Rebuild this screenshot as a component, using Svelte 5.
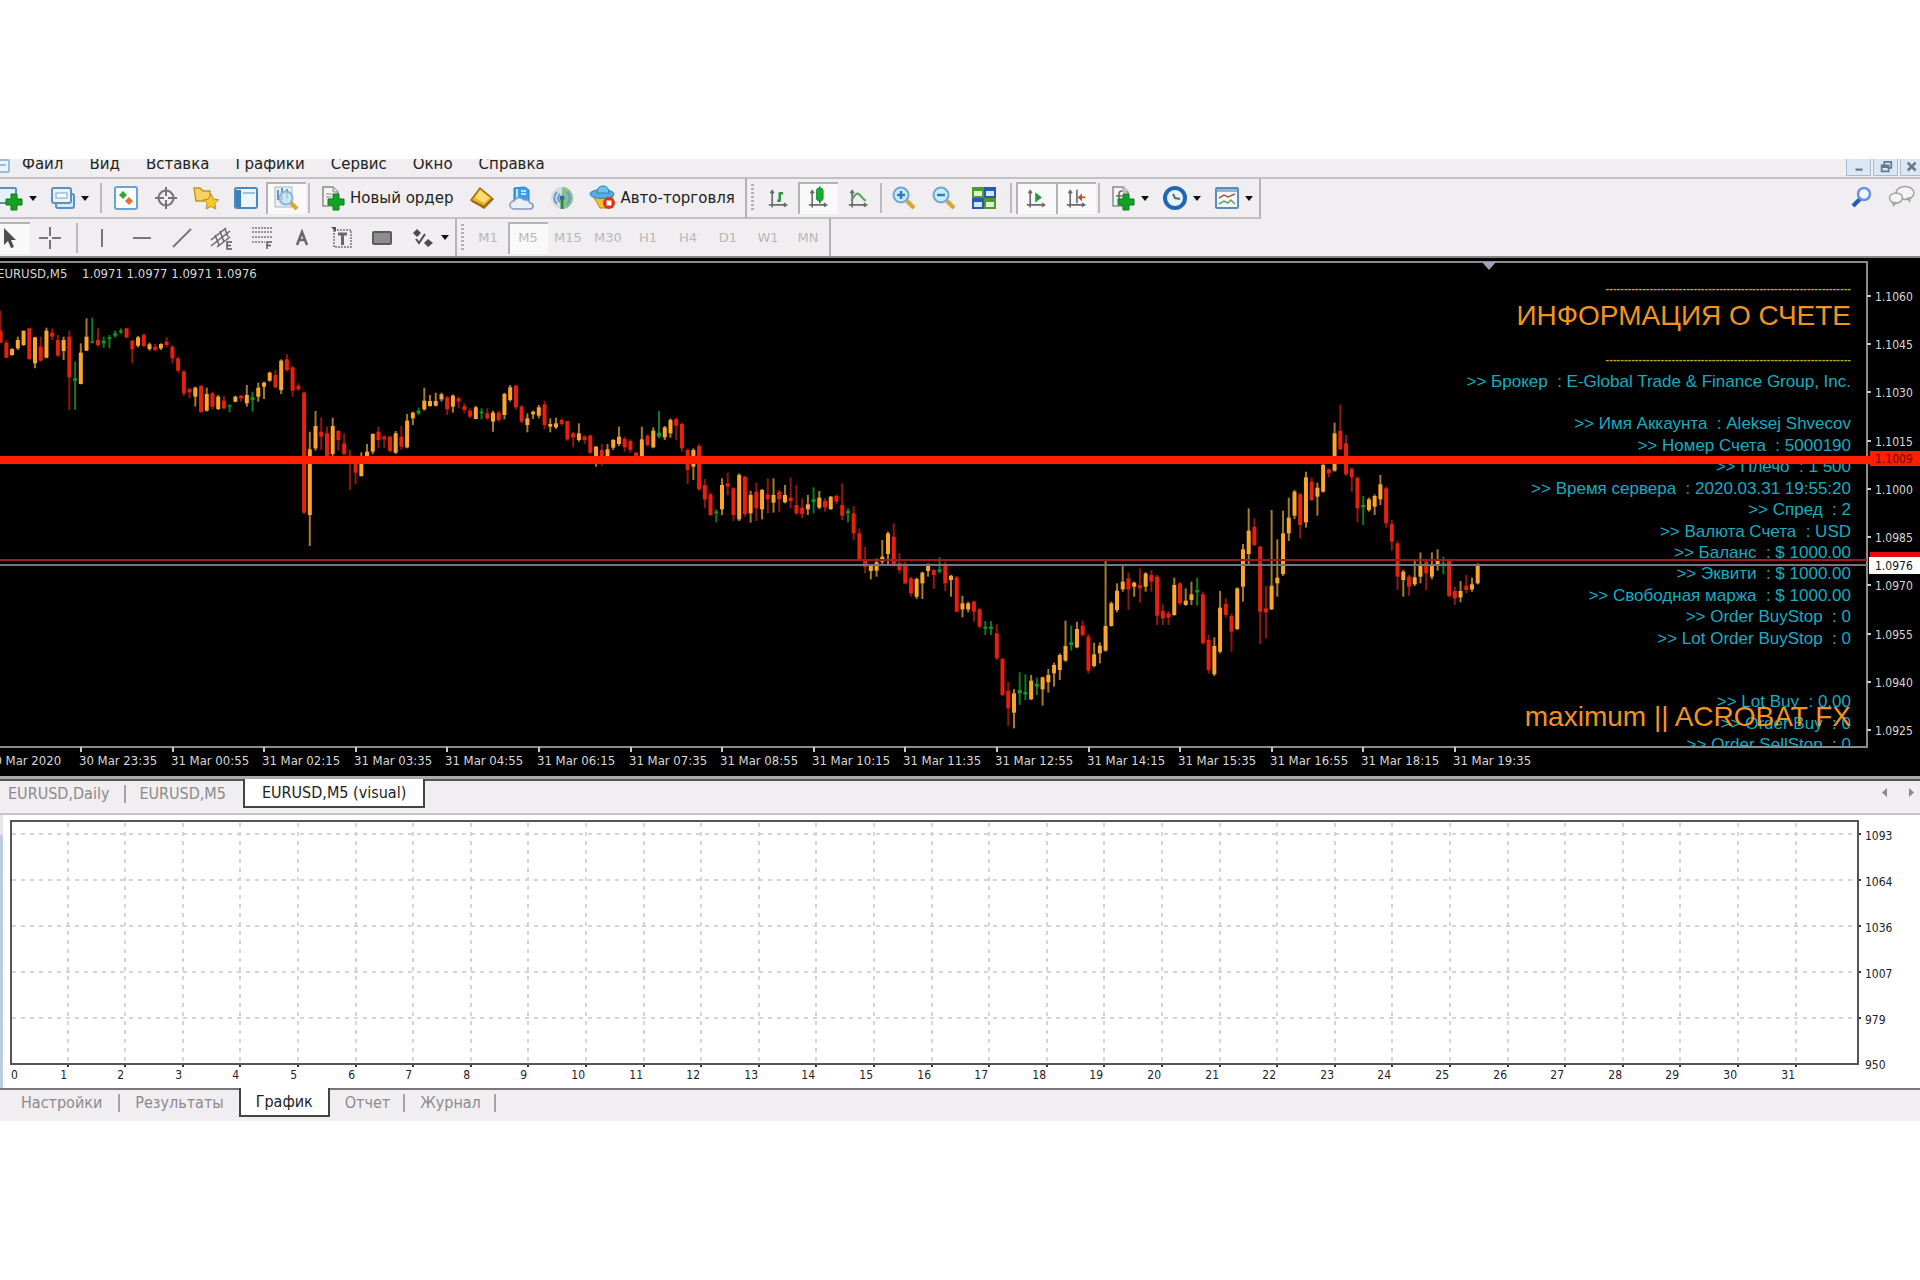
<script>
  const menu = ['Файл', 'Вид', 'Вставка', 'Графики', 'Сервис', 'Окно', 'Справка'];

  const plus = '<path d="M12 8h6v5h5v6h-5v5h-6v-5h-5v-6h5z" fill="#12a324" stroke="#0a7a18"/>';
  const withAxes = (shape) =>
    `<g transform="translate(2 3) scale(.84)"><path d="M5 2v20M1 19h21M3 5l2-3 2 3M19 17l3 2-3 2" fill="none" stroke="#6c6c6c" stroke-width="2"/>${shape}</g>`;
  const sheet = '<path d="M2 1h10l5 5v14H2z" fill="#f4f4f4" stroke="#8a8a8a" stroke-width="1.5"/><path d="M12 1v5h5" fill="#ddd" stroke="#8a8a8a"/>';
  const lens = '<path d="M15 15l7 7" stroke="#d9a530" stroke-width="4"/><circle cx="9" cy="9" r="7.5" fill="#c9ebfb" stroke="#6ea6d4" stroke-width="2"/>';

  const icons = {
    newChart:
      '<rect x="0" y="2" width="17" height="15" rx="1" fill="#e4f1fb" stroke="#5b92bd" stroke-width="2"/>' + plus,
    windows:
      '<rect x="5" y="8" width="18" height="14" rx="2" fill="#d8eaf8" stroke="#5c8fc4" stroke-width="2"/><rect x="1" y="2" width="19" height="15" rx="2" fill="#eaf4fc" stroke="#5c8fc4" stroke-width="2"/><path d="M5 7h11v5H5z" fill="#fff" stroke="#9dbfdd" stroke-width="1.5"/>',
    market:
      '<rect x="1" y="1" width="22" height="22" rx="2" fill="#fbfdff" stroke="#6ba2cf" stroke-width="2"/><path d="M9 5l4 4-4 4-4-4z" fill="#3aa33a"/><path d="M15 11l4 4-4 4-4-4z" fill="#e86a35"/>',
    target:
      '<circle cx="12" cy="12" r="7.5" fill="none" stroke="#747474" stroke-width="2"/><path d="M12 1v9M12 14v9M1 12h9M14 12h9" stroke="#747474" stroke-width="2"/>',
    navigator:
      '<path d="M0 2h6l3 3h7v10H2z" fill="#f7d263" stroke="#c29422" stroke-width="1.5"/><path d="M17 8l2.500 5 5 .8-3.700 3.700 1 5.500-4.800-2.600-4.800 2.600 1-5.500L9.500 13.800l5-.8z" fill="#fbc72c" stroke="#c08c14"/>',
    terminal:
      '<rect x="1" y="2" width="22" height="20" rx="2" fill="#edf6fd" stroke="#4d88bd" stroke-width="2"/><path d="M2 4h5v17H2z" fill="#3d7db9"/><path d="M9 7h12" stroke="#9cc2e2" stroke-width="2"/>',
    tester:
      '<rect x="1" y="1" width="17" height="20" fill="#e8eef4" stroke="#a9b6c4"/><path d="M4 4v10M8 2v12M13 3v10" stroke="#6f91b4" stroke-width="2"/><path d="M17 17l6 6" stroke="#d9a530" stroke-width="4"/><circle cx="12" cy="12" r="6.5" fill="#c3e2f6" fill-opacity=".75" stroke="#8bb3d6" stroke-width="2"/>',
    order: sheet + '<path d="M5 8h6M5 11h5" stroke="#888"/>' + plus,
    gold:
      '<path d="M10 2l13 11-9 9L1 14z" fill="#e9ae2b" stroke="#a06c10" stroke-width="1.5"/><path d="M10 4l10 8-6 5-9-5z" fill="#ffdc73"/><path d="M2 15l12 6 8-8" fill="none" stroke="#a06c10" stroke-width="2"/>',
    vps:
      '<path d="M4 2l11-1 4 3v11H4z" fill="#3a9fe8" stroke="#2c7fc4"/><path d="M7 3v10M11 5h5M11 8h5" stroke="#bfe3fb" stroke-width="2"/><path d="M4 23a4 4 0 010-8 6 6 0 0110-1 5 5 0 016 3 3 3 0 010 6z" fill="#e9eff8" stroke="#8296bd" stroke-width="1.5"/>',
    signals:
      '<circle cx="12" cy="12" r="11" fill="#d3dedb"/><path d="M12 1a11 11 0 010 22z" fill="#8abf93"/><path d="M7 6a8 8 0 000 12M10 8a5 5 0 000 8M17 6a8 8 0 010 12" fill="none" stroke="#6b98cb" stroke-width="2"/><circle cx="12" cy="12" r="2.5" fill="#2a66b8"/><path d="M12 12v11" stroke="#2f8a3e" stroke-width="3"/>',
    auto:
      '<path d="M2 10h20l-4 12H9z" fill="#f2c02e" stroke="#bb8a14"/><ellipse cx="11" cy="8" rx="12" ry="4.5" fill="#58aee0" stroke="#2f7fb4"/><path d="M6 7q0-7 6-7t6 7z" fill="#6fc1ea" stroke="#2f7fb4"/><circle cx="18" cy="17" r="6" fill="#dc3216"/><rect x="15.5" y="14.5" width="5" height="5" fill="#fff"/>',
    bars: withAxes('<path d="M14 4v11M14 5h4M11 14h3" stroke="#2e9140" stroke-width="3"/>'),
    candles: withAxes('<path d="M14 -3v20" stroke="#0d8a20" stroke-width="2"/><rect x="10" y="-1" width="8" height="15" rx="3" fill="#16b02c" stroke="#0d8a20"/>'),
    line: withAxes('<path d="M4 14q6-12 10-7t7 7" fill="none" stroke="#4fa35e" stroke-width="2.5"/>'),
    zoomIn: lens + '<path d="M5 9h8M9 5v8" stroke="#3578b8" stroke-width="2.5"/>',
    zoomOut: lens + '<path d="M5 9h8" stroke="#3578b8" stroke-width="2.5"/>',
    tile:
      '<path d="M0 1h12v11H0z" fill="#4f9a2b"/><path d="M12 1h12v11H12z" fill="#2859b8"/><path d="M0 12h12v11H0z" fill="#2859b8"/><path d="M12 12h12v11H12z" fill="#4f9a2b"/><path d="M2 5h8v5H2zM14 16h8v5h-8z" fill="#dff3c8"/><path d="M14 5h8v5h-8zM2 16h8v5H2z" fill="#d4e6fb"/>',
    scroll: withAxes('<path d="M11 4l8 6-8 6z" fill="#1d9c36"/>'),
    shift: withAxes('<path d="M13 1v16" stroke="#6c6c6c" stroke-width="2"/><path d="M14 10l5-5v4h4v2h-4v4z" fill="#c5502e"/>'),
    indicators: sheet + '<path d="M8 16V8q0-3 3-3M5 10h6" fill="none" stroke="#666" stroke-width="1.5"/>' + plus,
    clock:
      '<circle cx="12" cy="12" r="10" fill="#e8f3fc" stroke="#1d68b4" stroke-width="4"/><path d="M10 8l2 4 5 1" fill="none" stroke="#666" stroke-width="2"/>',
    template:
      '<rect x="1" y="2" width="22" height="20" rx="1" fill="#f4f9fd" stroke="#5b8db8" stroke-width="2"/><path d="M2 3h20v3H2z" fill="#8db8dc"/><path d="M4 12l5-3 4 2 7-3" fill="none" stroke="#b9543c" stroke-width="1.5"/><path d="M4 18l5-3 4 2 3-3 4 4" fill="none" stroke="#5aa565" stroke-width="1.5"/>',
    find:
      '<path d="M3 21l8-8" stroke="#2a56b8" stroke-width="4"/><circle cx="14" cy="9" r="6" fill="#f2f7fd" stroke="#6a92dc" stroke-width="2.5"/>',
    chat:
      '<ellipse cx="16" cy="8" rx="9" ry="6.5" fill="#f4f4f4" stroke="#a2a2a2" stroke-width="1.5"/><path d="M17 13l4 5 1-6z" fill="#a2a2a2"/><ellipse cx="7" cy="13" rx="6.5" ry="5" fill="#f4f4f4" stroke="#a2a2a2" stroke-width="1.5"/><path d="M3 17l1 5 5-5z" fill="#a2a2a2"/>',
    cursor: '<path d="M6 2v17l4-4 3 7 3-1-3-7h5z" fill="#4c4c4c"/>',
    cross: '<path d="M12 1v9M12 14v9M1 12h9M14 12h9" stroke="#777" stroke-width="2"/>',
    vline: '<path d="M12 3v18" stroke="#777" stroke-width="2"/>',
    hline: '<path d="M3 12h18" stroke="#777" stroke-width="2"/>',
    trend: '<path d="M3 21L21 3" stroke="#777" stroke-width="2"/>',
    channel:
      '<path d="M1 14L16 2M1 20L20 5M7 21L20 11M5 9l4 10M10 5l4 11M15 3l3 8" stroke="#666" stroke-width="1.5"/><path d="M22 16h-5v7h5M17 19.500h4" fill="none" stroke="#555" stroke-width="1.5"/>',
    fibo:
      '<path d="M2 2h20M2 6h20M2 11h20M2 16h13" stroke="#777" stroke-width="1.5" stroke-dasharray="2 1"/><path d="M17 23v-7h5M17 19.500h4" fill="none" stroke="#555" stroke-width="1.5"/>',
    letter: '<path d="M7 19l5-13 5 13M9 14h6" fill="none" stroke="#686868" stroke-width="2.5"/>',
    label:
      '<rect x="4" y="4" width="17" height="17" fill="none" stroke="#777" stroke-width="1.5" stroke-dasharray="2 1"/><path d="M8 8h9M12.500 8v11" stroke="#686868" stroke-width="3"/><path d="M1 1h5v5z" fill="#555"/>',
    rect: '<rect x="3" y="6" width="18" height="12" rx="1" fill="#8d8d8d" stroke="#5c5c5c" stroke-width="2"/>',
    arrows:
      '<path d="M6 3l4 4-4 4-4-4z" fill="#4c4c4c"/><path d="M17 13l5 4-5 4-4-4z" fill="#4c4c4c"/><path d="M5 13l3 4 6-9" fill="none" stroke="#4c4c4c" stroke-width="2"/>'
  };

  const mainTools = [
    { icon: 'newChart', tip: 'Новый график', drop: true },
    { icon: 'windows', tip: 'Профили', drop: true },
    { sep: 'wide' },
    { icon: 'market', tip: 'Обзор рынка' },
    { icon: 'target', tip: 'Окно данных' },
    { icon: 'navigator', tip: 'Навигатор' },
    { icon: 'terminal', tip: 'Терминал' },
    { icon: 'tester', tip: 'Тестер стратегий', on: true },
    { sep: 'narrow' },
    { icon: 'order', text: 'Новый ордер' },
    { icon: 'gold', tip: 'Редактор' },
    { icon: 'vps', tip: 'Виртуальный хостинг' },
    { icon: 'signals', tip: 'Сигналы' },
    { icon: 'auto', text: 'Авто-торговля' }
  ];
  const chartTools = [
    { icon: 'bars', tip: 'Бары' },
    { icon: 'candles', tip: 'Свечи', on: true },
    { icon: 'line', tip: 'Линия' },
    { sep: 'narrow' },
    { icon: 'zoomIn', tip: 'Увеличить' },
    { icon: 'zoomOut', tip: 'Уменьшить' },
    { icon: 'tile', tip: 'Расположить окна' },
    { sep: 'wide' },
    { icon: 'scroll', tip: 'Автопрокрутка', on: true },
    { icon: 'shift', tip: 'Сдвиг графика', on: true },
    { sep: 'narrow' },
    { icon: 'indicators', tip: 'Индикаторы', drop: true },
    { icon: 'clock', tip: 'Периоды', drop: true },
    { icon: 'template', tip: 'Шаблоны', drop: true }
  ];
  const drawTools = [
    { icon: 'cursor', tip: 'Курсор', on: true },
    { icon: 'cross', tip: 'Перекрестие' },
    { sep: 'wide' },
    { icon: 'vline', tip: 'Вертикальная линия' },
    { icon: 'hline', tip: 'Горизонтальная линия' },
    { icon: 'trend', tip: 'Трендовая линия' },
    { icon: 'channel', tip: 'Канал' },
    { icon: 'fibo', tip: 'Линии Фибоначчи' },
    { icon: 'letter', tip: 'Текст' },
    { icon: 'label', tip: 'Текстовая метка' },
    { icon: 'rect', tip: 'Прямоугольник' },
    { icon: 'arrows', tip: 'Стрелки', drop: true }
  ];
  const periods = ['M1', 'M5', 'M15', 'M30', 'H1', 'H4', 'D1', 'W1', 'MN'];

  // Candles: colour, high, low, body top, body bottom, in thirds of a unit below each block's base.
  const blocks = [
    {
      base: 32,
      rows: `r62 160 122 158,r150 205 158 203,y175 197 177 195,y140 180 150 175,y122 168 122 165,r113 210 115 207,y140 235 142 220,r140 215 170 212,y113 205 122 203,r115 150 128 140,r135 200 150 197,y140 210 150 183,r122 360 140 262,g215 360 265 272,y160 283 188 282,y85 183 140 182,g83 160 154 158,r115 170 150 165,g140 173 152 160,g135 175 142 147,g122 143 130 137,g115 132 122 127,r113 145 115 142,r150 220 152 178,y138 172 142 167,r130 172 135 168,y158 182 163 177,r162 182 170 180,y160 180 162 175,r142 172 155 165,r165 220 170 205,r200 248 205 242,r240 318 245 310,r293 325 297 307,y290 350 293 320,r285 368 288 366,y293 365 312 362,r305 358 310 350,y315 360 320 357,r318 358 332 355,g343 367 346 350,y317 337 320 335,r315 335 317 325,y285 350 315 340,g305 365 322 330,y278 335 293 320,y275 327 278 290,y245 275 248 272,r240 295 255 292,y208 312 212 300,r192 245 208 240,r228 320 232 302,r280 303 287 298,r305 672 308 668,y425 768 478 675,y363 482 408 475,r382 480 425 440,r410 505 430 500,y383 500 408 492,r420 482 423 450,r430 497 460 492,r480 600 497 515,r500 582 510 548,y487 560 510 558,y462 505 485 500,y430 492 432 485,r410 475 425 450,r435 473 440 448,r437 487 440 483,y423 492 430 488,r408 480 440 470,y372 475 392 472,y365 405 368 385,g353 375 362 370,y293 362 332 358,y315 350 333 348,y308 350 333 347,y308 335 313 328,r318 375 322 358,y313 368 317 350,r320 355 325 335,r340 370 348 360,r355 385 362 380,y348 388 352 387`
    },
    {
      base: 112,
      rows: `g115 148 125 130,r115 150 130 145,y122 185 128 155,r122 155 128 150,y68 148 72 135,y45 95 52 90,r45 118 47 112,r105 160 110 155,y130 187 145 165,y122 147 125 133,y105 145 112 137,r93 178 103 165,y145 187 162 170,y143 177 160 172,r145 167 150 162,r152 212 153 208,r185 232 190 202,y160 215 190 210,r195 222 200 210,r193 252 197 248,y228 290 230 270,r222 288 240 270,y222 265 238 260,y207 240 210 233,y170 228 200 222,r200 245 207 232,r208 248 213 240,r245 262 248 260,y170 262 208 260,r193 230 197 225,y172 235 182 232,g123 205 188 200,y168 210 172 202,y145 203 150 190,r143 210 147 167,r158 245 162 235,r235 342 240 300,y235 330 240 290,r222 362 228 358,r327 415 345 388,r367 438 373 435,g418 457 424 430,y325 435 345 418,r308 375 340 350,r352 453 355 435,y310 453 315 448,r318 440 320 432,y362 458 375 430,r338 453 365 415,y357 448 360 418,r325 430 373 388,y325 428 375 398,r360 427 365 388,y345 400 375 397,r323 415 383 393,r345 435 405 430,r385 445 413 432,y375 435 403 418,g352 430 388 396,y363 418 383 413,r385 425 393 412,y378 420 380 417,r373 402 378 395,r340 450 405 437,g415 457 423 430,r408 510 430 490,r475 572 490 570,r530 610 568 590`
    },
    {
      base: 222,
      rows: `y255 298 257 273,y235 290 247 272,y180 255 230 245,y155 252 160 222,r130 260 170 255,r220 280 250 270,r245 313 258 310,r290 350 295 340,y293 357 297 350,y275 357 278 310,y250 290 255 273,r268 327 270 285,g232 280 268 275,r245 333 258 310,y285 350 287 300,r288 397 292 395,y347 412 370 388,y365 397 370 388,r362 425 365 395,r383 445 388 440,g423 465 440 446,g423 465 440 446,r433 540 460 535,r533 648 537 645,r605 738 632 685,y627 745 640 698,g577 675 630 640,g583 660 636 643,y585 660 602 658,g593 645 612 620,y590 677 592 628,y567 638 585 607,y548 620 555 580,y520 600 525 570,y422 545 498 542,g437 512 487 495,y425 505 447 502,r422 470 437 465,r462 580 470 572,y488 562 523 558,y487 550 497 520,y238 515 438 512,y365 440 370 438,y310 397 332 390,y257 335 305 328,r278 390 295 328,y305 350 308 320,r265 368 315 325,y277 335 280 320,r270 335 285 305,r285 435 290 407,r373 435 393 415,r393 435 400 413,y293 407 315 405,r307 375 310 370,y325 377 362 375,y305 375 343 360,g293 377 330 337,r335 493 343 490,r465 580 480 570,y472 588 498 583,y333 520 383 515,r355 412 372 405,r400 515 408 455,y322 450 325 447,y192 365 208 320,y85 258 152 222,r115 198 140 195,r197 492 200 395,r318 475 385 397,y90 390 317 388`
    },
    {
      base: 132,
      rows: `y448 620 563 580,y362 558 430 552,y323 453 383 430,y300 387 305 377,r308 445 313 405,y245 413 262 397,r262 333 275 330,y278 377 293 320,y222 308 225 305,r235 262 238 250,y98 245 130 242,r45 180 122 178,r135 258 160 252,r232 305 237 262,r260 397 263 355,g318 405 345 352,y323 365 328 360,y313 375 318 350,y255 345 283 328,r290 413 295 400,r390 482 402 455,r453 600 460 560,y540 620 545 570,r555 617 560 590,y508 588 562 583,y487 580 525 560,r508 600 515 550,y487 568 525 560,y478 542 507 523,g500 552 520 528,r508 622 510 618,r590 645 603 625,y573 637 603 622,r555 610 587 600,y563 605 583 598,y520 583 525 580`
    }
  ];
  const lastX = 1477.7;
  const stepX = 5.725;
  const parsed = blocks.flatMap(({ base, rows }) =>
    rows.split(',').map((row) => {
      const [high, low, top, bottom] = row.slice(1).split(' ').map((v) => base + Number(v) / 3);
      return { tone: row[0], high, low, top, bottom };
    })
  );
  const candles = parsed.map((c, i) => ({ ...c, x: lastX - (parsed.length - 1 - i) * stepX }));

  const times = ['30 Mar 2020', '30 Mar 23:35', '31 Mar 00:55', '31 Mar 02:15', '31 Mar 03:35', '31 Mar 04:55', '31 Mar 06:15', '31 Mar 07:35', '31 Mar 08:55', '31 Mar 10:15', '31 Mar 11:35', '31 Mar 12:55', '31 Mar 14:15', '31 Mar 15:35', '31 Mar 16:55', '31 Mar 18:15', '31 Mar 19:35'];
  const timeX = (i) => Math.round(81 + (i - 1) * 16 * stepX);
  const prices = ['1.1060', '1.1045', '1.1030', '1.1015', '1.1000', '1.0985', '1.0970', '1.0955', '1.0940', '1.0925'];
  const priceY = (i) => Math.round(38 + (i * 434) / 9);

  const account = [
    ['Брокер', 'E-Global Trade & Finance Group, Inc.', 129],
    ['Имя Аккаунта', 'Aleksej Shvecov', 171],
    ['Номер Счета', '5000190', 193],
    ['Плечо', '1 500', 214],
    ['Время сервера', '2020.03.31 19:55:20', 236],
    ['Спред', '2', 257],
    ['Валюта Счета', 'USD', 279],
    ['Баланс', '$ 1000.00', 300],
    ['Эквити', '$ 1000.00', 321],
    ['Свободная маржа', '$ 1000.00', 343],
    ['Order BuyStop', '0', 364],
    ['Lot Order BuyStop', '0', 386],
    ['Lot Buy', '0.00', 449],
    ['Order Buy', '0', 471],
    ['Order SellStop', '0', 492]
  ];
  const rule = '-'.repeat(67);

  const days = Array.from({ length: 31 }, (_, i) => ({ n: i + 1, x: Math.round(10 + (i + 1) * 57.6) }));
  const levels = [1093, 1064, 1036, 1007, 979].map((n, i) => ({ n, y: 19 + i * 46 }));

  let chartTab = $state(2);
  let testerTab = $state(2);
  const chartTabs = ['EURUSD,Daily', 'EURUSD,M5', 'EURUSD,M5 (visual)'];
  const testerTabs = ['Настройки', 'Результаты', 'График', 'Отчет', 'Журнал'];
</script>

{#snippet tools(list)}
  {#each list as t}
    {#if t.sep}
      <span class="sep {t.sep}"></span>
    {:else}
      <button type="button" class="tool" class:on={t.on} class:drop={t.drop} class:wide={t.text} aria-label={t.text ?? t.tip}>
        <svg class="icon" viewBox="0 0 24 24" aria-hidden="true">{@html icons[t.icon]}</svg>
        {#if t.text}<span>{t.text}</span>{/if}
        {#if t.drop}<i class="caret"></i>{/if}
      </button>
    {/if}
  {/each}
{/snippet}

<main class="terminal">
  <header class="menubar">
    <svg class="doc" viewBox="0 0 12 16" aria-hidden="true"><rect x="-4" y="1" width="13" height="12" rx="1" fill="#eaf4fc" stroke="#9dbcdc" stroke-width="2" /><path d="M0 6h6" stroke="#9dbcdc" stroke-width="2" /></svg>
    <nav>
      {#each menu as item}<button type="button" class="item">{item}</button>{/each}
    </nav>
    <div class="controls">
      <button type="button" aria-label="Свернуть"><svg viewBox="0 0 16 16"><path d="M4 11h8" stroke="#66788c" stroke-width="2.5" /></svg></button>
      <button type="button" aria-label="Восстановить"><svg viewBox="0 0 16 16"><path d="M6 6V2h8v7h-3M3 6h8v7H3zM3 8h8" fill="none" stroke="#66788c" stroke-width="2" /></svg></button>
      <button type="button" aria-label="Закрыть"><svg viewBox="0 0 16 16"><path d="M2 3l9 9M11 3l-9 9" stroke="#66788c" stroke-width="3" /></svg></button>
    </div>
  </header>

  <div class="bar">
    <div class="group first">{@render tools(mainTools)}</div>
    <div class="group"><span class="grip"></span>{@render tools(chartTools)}</div>
    <div class="aside">
      <button type="button" class="tool" aria-label="Поиск"><svg class="icon" viewBox="0 0 24 24">{@html icons.find}</svg></button>
      <button type="button" class="tool" aria-label="Чат"><svg class="icon chat" viewBox="0 0 26 24">{@html icons.chat}</svg></button>
    </div>
  </div>
  <div class="bar second">
    <div class="group first">{@render tools(drawTools)}</div>
    <div class="group">
      <span class="grip"></span>
      {#each periods as p}<button type="button" class="tool period" class:on={p === 'M5'}>{p}</button>{/each}
    </div>
  </div>

  <section class="chart">
    <svg viewBox="0 0 1920 518" role="img" aria-label="EURUSD,M5">
      <defs><clipPath id="plot"><rect x="0" y="4" width="1867" height="485" /></clipPath></defs>
      <path class="frame" d="M0 4H1867V489H0" />
      <path d="M1482 4h14l-7 8z" fill="#a3a0bd" />
      <text class="tick" x="-3" y="20">EURUSD,M5</text>
      <text class="tick" x="82" y="20">1.0971 1.0977 1.0971 1.0976</text>

      <g clip-path="url(#plot)">
        {#each candles as c}
          <g class={c.tone}>
            <line x1={c.x} x2={c.x} y1={c.high} y2={c.low} />
            <rect x={c.x - 2} y={c.top} width="4" height={c.bottom - c.top} />
          </g>
        {/each}
        {#each account as [label, value, y]}
          <text class="info" x="1851" {y}>&gt;&gt; {label}&nbsp; : {value}</text>
        {/each}
        <text class="rule" x="1851" y="34">{rule}</text>
        <text class="title" x="1851" y="67">ИНФОРМАЦИЯ О СЧЕТЕ</text>
        <text class="rule" x="1851" y="105">{rule}</text>
        <text class="title" x="1851" y="468">maximum || ACROBAT FX</text>
      </g>

      <path d="M0 302H1867" stroke="#9c1c1c" stroke-width="2" />
      <path d="M0 307H1867" stroke="#77777f" stroke-width="2" />
      <path d="M0 202H1870" stroke="#ff1e00" stroke-width="8" />

      {#each times as t, i}
        <path class="mark" d="M{timeX(i)} 489v5" />
        <text class="tick" x={timeX(i) - 2} y="507">{t}</text>
      {/each}
      {#each prices as p, i}
        <path class="mark" d="M1867 {priceY(i)}h4" />
        <text class="tick price" x="1875" y={priceY(i) + 5}>{p}</text>
      {/each}
      <rect x="1870" y="193" width="50" height="15" fill="#ff1e00" />
      <text class="tick price dark" x="1875" y="205">1.1009</text>
      <rect x="1870" y="294" width="50" height="6" fill="#e01010" />
      <rect x="1869" y="299" width="51" height="17" fill="#fff" />
      <text class="tick price black" x="1875" y="312">1.0976</text>
    </svg>
  </section>

  <div class="tabs upper" role="tablist">
    {#each chartTabs as t, i}
      <button type="button" role="tab" aria-selected={chartTab === i} class:open={chartTab === i} onclick={() => (chartTab = i)}>{t}</button>
    {/each}
    <div class="arrows">
      <button type="button" aria-label="Назад"><svg viewBox="0 0 8 10"><path d="M6 0v9L1 4.500z" fill="#8a8a8a" /></svg></button>
      <button type="button" aria-label="Вперед"><svg viewBox="0 0 8 10"><path d="M2 0v9l5-4.500z" fill="#8a8a8a" /></svg></button>
    </div>
  </div>

  <section class="report">
    <svg viewBox="0 0 1920 273" role="img" aria-label="График">
      <path d="M0 0h3v20H0z" fill="#e4e6ea" />
      <path d="M0 20h3v253H0z" fill="#bccde2" />
      {#each days as d}
        <path class="grid" d="M{d.x} 8V248" />
        <path class="notch" d="M{d.x} 249v3" />
        <text class="num end" x={d.x - 1} y="264">{d.n}</text>
      {/each}
      {#each levels as l}
        <path class="grid" d="M12 {l.y}H1857" />
        <path class="notch" d="M1858 {l.y}h3" />
        <text class="num" x="1865" y={l.y + 6}>{l.n}</text>
      {/each}
      <rect x="11" y="6" width="1847" height="243" fill="none" stroke="#555" stroke-width="2" />
      <text class="num" x="11" y="264">0</text>
      <text class="num" x="1865" y="254">950</text>
    </svg>
  </section>

  <div class="tabs lower" role="tablist">
    {#each testerTabs as t, i}
      <button type="button" role="tab" aria-selected={testerTab === i} class:open={testerTab === i} onclick={() => (testerTab = i)}>{t}</button>
    {/each}
  </div>
</main>

<style>
  :global(body) {
    background: #fff;
  }
  .terminal {
    margin-top: 159px;
    overflow: hidden;
    background: #f0eef0;
    color: #222;
    font-family: 'DejaVu Sans', 'Noto Sans', sans-serif;
    font-size: 15px;
  }
  button {
    margin: 0;
    padding: 0;
    border: 0;
    background: none;
    color: inherit;
    font: inherit;
  }
  svg {
    display: block;
  }

  .menubar {
    display: flex;
    align-items: flex-end;
    height: 18px;
    border-bottom: 2px solid #c3c1c3;
    overflow: hidden;
  }
  .doc {
    width: 12px;
    height: 16px;
    flex: none;
    align-self: flex-start;
  }
  nav {
    display: flex;
    gap: 26px;
    margin: 0 auto 4px 10px;
  }
  .item {
    line-height: 18px;
  }
  .controls {
    display: flex;
    gap: 2px;
    height: 17px;
    align-self: flex-start;
    margin-right: -5px;
  }
  .controls button {
    width: 25px;
    background: #dbe7f3;
    border: solid #a9bccf;
    border-width: 0 1px 1px;
  }
  .controls svg {
    width: 14px;
    height: 14px;
    margin-left: 5px;
  }

  .bar {
    display: flex;
    height: 40px;
  }
  .second {
    height: 37px;
    border-bottom: 2px solid #868686;
  }
  .group {
    display: flex;
    align-items: center;
    padding-right: 1px;
    border-right: 2px solid #b4b2b4;
    border-bottom: 2px solid #c3c1c3;
    white-space: nowrap;
  }
  .second .group {
    border-bottom: 0;
  }
  .first {
    margin-left: -10px;
  }
  .grip {
    width: 3px;
    height: 28px;
    margin: 0 4px;
    background: repeating-linear-gradient(#b0aeb0 0 2px, #f0eef0 2px 4px);
  }
  .tool {
    display: flex;
    align-items: center;
    justify-content: center;
    width: 40px;
    height: 32px;
    flex: none;
  }
  .tool.on {
    background: #faf9fa;
    box-shadow: inset 2px 2px #b4b2b4;
  }
  .tool.drop {
    width: 52px;
    gap: 6px;
    padding-left: 4px;
  }
  .tool.wide {
    width: auto;
    gap: 5px;
    padding: 0 9px;
  }
  .icon {
    width: 24px;
    height: 24px;
    flex: none;
    overflow: visible;
  }
  .caret {
    border: 4px solid transparent;
    border-top: 5px solid #111;
    border-bottom: 0;
  }
  .sep {
    width: 2px;
    height: 30px;
    background: #bcbabc;
    margin: 0 2px;
  }
  .sep.wide {
    margin: 0 4px 0 6px;
  }
  .period {
    color: #b9b7b9;
    font-size: 13px;
  }
  .aside {
    display: flex;
    margin: 0 -2px 4px auto;
    align-items: center;
  }
  .chat {
    width: 30px;
  }

  .chart {
    background: #000;
    border-bottom: 3px solid #aaa;
  }
  .chart,
  .report,
  .tabs {
    font-family: 'DejaVu Sans Condensed', 'DejaVu Sans', 'Noto Sans', sans-serif;
  }
  .chart svg,
  .report svg {
    width: 100%;
    height: auto;
  }
  .frame {
    fill: none;
    stroke: #8c8c8c;
    stroke-width: 2;
  }
  .mark {
    stroke: #c8c8c8;
    stroke-width: 2;
  }
  .tick {
    fill: #d8d8d8;
    font-size: 13px;
  }
  .tick.price {
    font-size: 12px;
  }
  .tick.dark {
    fill: #6a0c00;
  }
  .tick.black {
    fill: #111;
  }
  .r line {
    stroke: #8f1613;
  }
  .r rect {
    fill: #e6200f;
  }
  .y line {
    stroke: #a57b2a;
  }
  .y rect {
    fill: #fba52c;
  }
  .g line {
    stroke: #0d7a25;
  }
  .g rect {
    fill: #0e9a2c;
  }
  line {
    stroke-width: 2;
  }
  .info,
  .title,
  .rule {
    font-family: 'Liberation Sans', Arial, sans-serif;
    text-anchor: end;
  }
  .info {
    fill: #14adc2;
    font-size: 17px;
  }
  .title {
    fill: #f0941f;
    font-size: 28px;
  }
  .rule {
    fill: #b8aa30;
    font-size: 11px;
    font-weight: bold;
  }

  .tabs {
    display: flex;
    align-items: flex-start;
    color: #8c8a8c;
    font-size: 16px;
  }
  .tabs > button {
    position: relative;
    height: 26px;
    padding: 0 15px;
    line-height: 26px;
  }
  .upper {
    height: 32px;
    border-top: 2px solid #555;
    border-bottom: 2px solid #c6c4c6;
  }
  .upper > button {
    padding: 0 17px 0 13px;
  }
  .upper > button:first-child {
    padding-left: 8px;
  }
  .lower {
    height: 31px;
    padding-left: 6px;
    border-top: 2px solid #777;
  }
  .lower > button:first-child {
    padding-right: 18px;
  }
  .tabs > button:not(.open)::after {
    content: '';
    position: absolute;
    right: 0;
    top: 4px;
    height: 18px;
    border-right: 2px solid #a5a3a5;
  }
  .tabs > button:not(.open):has(+ .open)::after {
    display: none;
  }
  .tabs > .open {
    height: 29px;
    margin-top: -2px;
    padding: 1px 15px 0;
    border: solid #444;
    border-width: 0 2px 2px;
    background: #fff;
    color: #222;
  }
  .upper > .open {
    padding: 1px 17px 0;
  }
  .arrows {
    display: flex;
    gap: 18px;
    margin: 7px 5px 0 auto;
  }
  .arrows svg {
    width: 8px;
    height: 10px;
  }
  .report {
    background: #fff;
  }
  .grid {
    stroke: #d4d4d4;
    stroke-width: 2;
    stroke-dasharray: 4 5;
  }
  .notch {
    stroke: #333;
    stroke-width: 2;
  }
  .num {
    fill: #222;
    font-size: 12px;
  }
  .num.end {
    text-anchor: end;
  }
</style>
